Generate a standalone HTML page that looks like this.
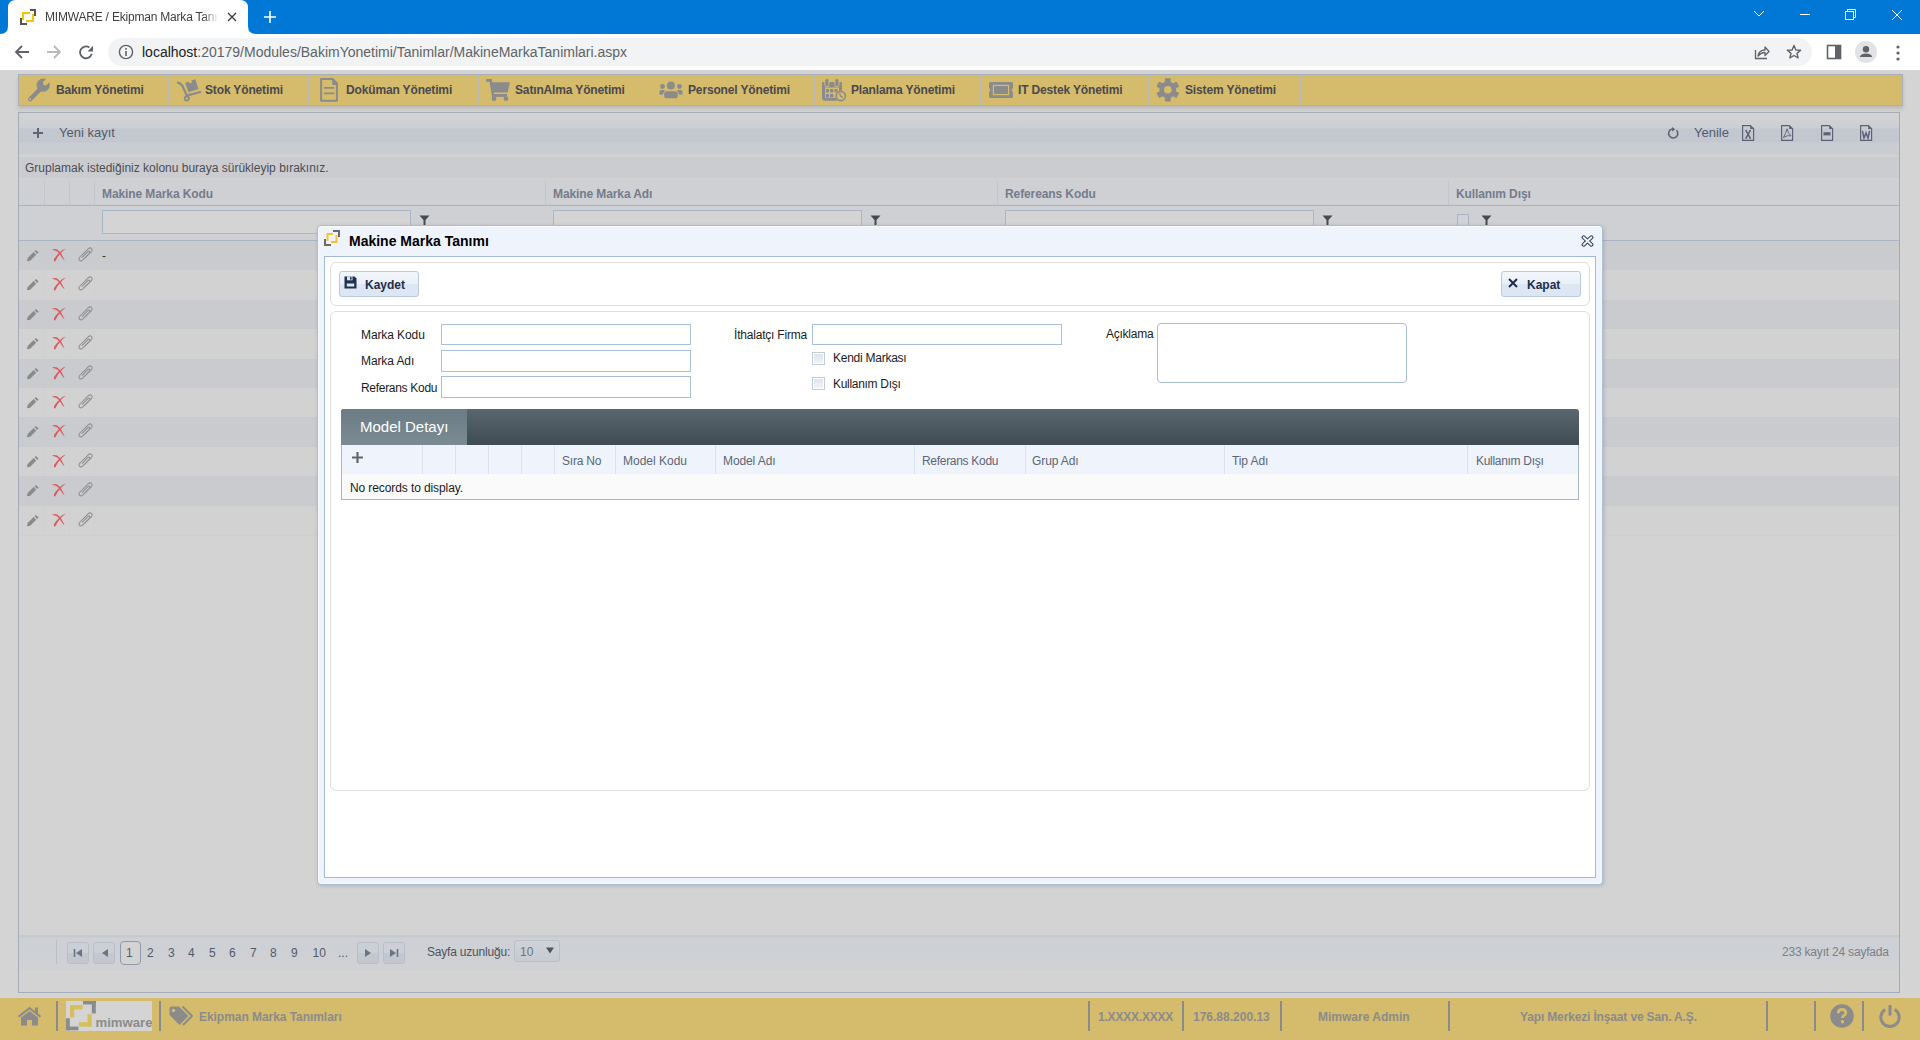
<!DOCTYPE html>
<html><head><meta charset="utf-8">
<style>
*{box-sizing:border-box;margin:0;padding:0}
html,body{width:1920px;height:1040px;overflow:hidden;background:#d4d4d4;font-family:"Liberation Sans",sans-serif;}
.a{position:absolute}
.t{position:absolute;white-space:nowrap;line-height:1}
svg{display:block}
/* chrome */
#tabbar{left:0;top:0;width:1920px;height:34px;background:#0178d6}
#toolbar{left:0;top:34px;width:1920px;height:36px;background:#fff}
#omni{left:108px;top:38px;width:1704px;height:28px;background:#f1f3f4;border-radius:14px}
/* menu */
#menu{left:18px;top:74px;width:1885px;height:32px;background:#d5bb6c;border:1px solid #a9b0ba;box-shadow:0 3px 4px rgba(0,0,0,.12)}
.msep{position:absolute;top:0;width:1px;height:30px;background:#b9bcb4}
.mt{position:absolute;top:8px;font-size:12px;font-weight:bold;color:#4a494d;white-space:nowrap;line-height:14px;letter-spacing:-0.15px}
/* grid */
#grid{left:18px;top:112px;width:1882px;height:881px;border:1px solid #a3abb7;background:#d3d3d3}
#footer{left:0;top:998px;width:1920px;height:42px;background:#d5bb6c}
/* modal */
#modal{left:317px;top:225px;width:1286px;height:660px;background:#eff3fb;border:1px solid #a8bdd8;border-radius:4px;box-shadow:1px 1px 4px rgba(0,0,0,.14),inset 0 0 0 1px #f6f9fd}
#mcontent{left:324px;top:256px;width:1272px;height:622px;background:#fff;border:1px solid #a3b8d3}
</style></head>
<body>
<!-- CHROME -->
<div id="tabbar" class="a"></div>
<!-- active tab -->
<svg class="a" style="left:0;top:0" width="262" height="34" viewBox="0 0 262 34"><path d="M0 34 Q8 34 8 26 L8 8 Q8 0 16 0 L240 0 Q248 0 248 8 L248 26 Q248 34 256 34 Z" fill="#fff"/></svg>
<svg class="a" style="left:20px;top:9px" width="16" height="16" viewBox="0 0 16 16"><path d="M1 9 V15 H7" fill="none" stroke="#555" stroke-width="2"/><path d="M10 1 H15 V7" fill="none" stroke="#555" stroke-width="2"/><path d="M3 11 V4 H10" fill="none" stroke="#f7c600" stroke-width="2"/><path d="M13 5 V12 H6" fill="none" stroke="#f7c600" stroke-width="2"/></svg>
<div class="t" style="left:45px;top:10px;font-size:12px;color:#3c4043;width:174px;overflow:hidden;line-height:15px;letter-spacing:-0.2px;-webkit-mask-image:linear-gradient(to right,#000 158px,transparent 174px)">MIMWARE / Ekipman Marka Tanımları</div>
<svg class="a" style="left:226px;top:11px" width="12" height="12" viewBox="0 0 12 12"><path d="M2 2 L10 10 M10 2 L2 10" stroke="#3c4043" stroke-width="1.4"/></svg>
<svg class="a" style="left:263px;top:10px" width="14" height="14" viewBox="0 0 14 14"><path d="M7 1 V13 M1 7 H13" stroke="#fff" stroke-width="1.6"/></svg>
<!-- window controls -->
<svg class="a" style="left:1753px;top:9px" width="12" height="10" viewBox="0 0 12 10"><path d="M1 2 L6 7 L11 2" fill="none" stroke="#fff" stroke-width="1"/></svg>
<div class="a" style="left:1800px;top:14px;width:10px;height:1px;background:#fff"></div>
<svg class="a" style="left:1845px;top:9px" width="12" height="12" viewBox="0 0 12 12"><rect x="0.5" y="2.5" width="8" height="8" fill="none" stroke="#fff"/><path d="M2.5 2.5 V0.5 H10.5 V8.5 H8.5" fill="none" stroke="#fff"/></svg>
<svg class="a" style="left:1891px;top:9px" width="12" height="12" viewBox="0 0 12 12"><path d="M1 1 L11 11 M11 1 L1 11" stroke="#fff" stroke-width="1"/></svg>
<div id="toolbar" class="a"></div>
<div id="omni" class="a"></div>
<!-- nav icons -->
<svg class="a" style="left:14px;top:44px" width="16" height="16" viewBox="0 0 16 16"><path d="M15 8 H2.5 M8 2 L2 8 L8 14" fill="none" stroke="#5f6368" stroke-width="1.8"/></svg>
<svg class="a" style="left:46px;top:44px" width="16" height="16" viewBox="0 0 16 16"><path d="M1 8 H13.5 M8 2 L14 8 L8 14" fill="none" stroke="#b7b9bc" stroke-width="1.8"/></svg>
<svg class="a" style="left:78px;top:44px" width="16" height="16" viewBox="0 0 16 16"><path d="M11.4 3.5 A5.9 5.9 0 1 0 13.7 9.8" fill="none" stroke="#5f6368" stroke-width="1.8"/><path d="M9.6 7.4 L15 7.4 L15 1.8 Z" fill="#5f6368"/></svg>
<svg class="a" style="left:118px;top:44px" width="16" height="16" viewBox="0 0 16 16"><circle cx="8" cy="8" r="6.6" fill="none" stroke="#5f6368" stroke-width="1.4"/><rect x="7.2" y="7" width="1.6" height="5" fill="#5f6368"/><rect x="7.2" y="4" width="1.6" height="1.7" fill="#5f6368"/></svg>
<div class="t" style="left:142px;top:44px;font-size:14px;line-height:16px;color:#5f6368"><span style="color:#202124">localhost</span>:20179/Modules/BakimYonetimi/Tanimlar/MakineMarkaTanimlari.aspx</div>
<!-- right toolbar icons -->
<svg class="a" style="left:1754px;top:44px" width="16" height="16" viewBox="0 0 16 16"><path d="M1.5 6 V14.5 H13" fill="none" stroke="#5f6368" stroke-width="1.3"/><path d="M4 12 Q5 6 11 6 V3 L15 7.5 L11 11.5 V8.5 Q7 8.5 4 12 Z" fill="none" stroke="#5f6368" stroke-width="1.3" stroke-linejoin="round"/></svg>
<svg class="a" style="left:1786px;top:44px" width="16" height="16" viewBox="0 0 16 16"><path d="M8 1.5 L9.9 6 L14.6 6.3 L11 9.4 L12.1 14 L8 11.5 L3.9 14 L5 9.4 L1.4 6.3 L6.1 6 Z" fill="none" stroke="#5f6368" stroke-width="1.4" stroke-linejoin="round"/></svg>
<svg class="a" style="left:1826px;top:44px" width="16" height="16" viewBox="0 0 16 16"><rect x="1.5" y="1.5" width="13" height="13" fill="none" stroke="#5f6368" stroke-width="1.6"/><rect x="9" y="1.5" width="5.5" height="13" fill="#5f6368"/></svg>
<svg class="a" style="left:1855px;top:41px" width="22" height="22" viewBox="0 0 22 22"><circle cx="11" cy="11" r="11" fill="#e1e3e6"/><circle cx="11" cy="8.3" r="3.2" fill="#5f6368"/><path d="M4.8 16 Q5.5 12.5 11 12.5 Q16.5 12.5 17.2 16 Z" fill="#5f6368"/></svg>
<svg class="a" style="left:1896px;top:45px" width="4" height="16" viewBox="0 0 4 16"><circle cx="2" cy="2" r="1.6" fill="#5f6368"/><circle cx="2" cy="8" r="1.6" fill="#5f6368"/><circle cx="2" cy="14" r="1.6" fill="#5f6368"/></svg>

<!-- MENU -->
<div id="menu" class="a">
<div class="msep" style="left:149px"></div>
<div class="msep" style="left:289px"></div>
<div class="msep" style="left:459px"></div>
<div class="msep" style="left:632px"></div>
<div class="msep" style="left:795px"></div>
<div class="msep" style="left:961px"></div>
<div class="msep" style="left:1129px"></div>
<div class="msep" style="left:1281px"></div>
<div class="mt" style="left:37px">Bakım Yönetimi</div>
<div class="mt" style="left:186px">Stok Yönetimi</div>
<div class="mt" style="left:327px">Doküman Yönetimi</div>
<div class="mt" style="left:496px">SatınAlma Yönetimi</div>
<div class="mt" style="left:669px">Personel Yönetimi</div>
<div class="mt" style="left:832px">Planlama Yönetimi</div>
<div class="mt" style="left:999px">IT Destek Yönetimi</div>
<div class="mt" style="left:1166px">Sistem Yönetimi</div>
<!-- wrench -->
<svg class="a" style="left:8px;top:3px" width="25" height="25" viewBox="0 0 25 25"><path d="M3.2 21.2 L13.5 10.8" stroke="#8b8b8b" stroke-width="4.4" stroke-linecap="round"/><circle cx="16.2" cy="7.2" r="6.6" fill="#8b8b8b"/><circle cx="18.2" cy="5.1" r="2.3" fill="#d5bb6c"/><path d="M16.57 3.47 L19.83 6.73 L26 0.5 L22.8 -2.7 Z" fill="#d5bb6c"/><circle cx="3.2" cy="21.2" r="1" fill="#d5bb6c"/></svg>
<!-- stok hand truck -->
<svg class="a" style="left:158px;top:4px" width="26" height="24" viewBox="0 0 26 24"><path d="M0.8 3.6 Q3.8 4.2 5.4 6.8 L9.8 16.6 L23.3 13" fill="none" stroke="#8b8b8b" stroke-width="2.2" stroke-linecap="round" stroke-linejoin="round"/><circle cx="9.8" cy="19.6" r="2.1" fill="none" stroke="#8b8b8b" stroke-width="1.8"/><path d="M8.2 4 L11.5 13.3 L21.5 9.9 L18.3 0.3 L14.4 1.6 L15.1 3.6 Q13.5 4.6 12 3.8 L11.4 2.6 Z" fill="#8b8b8b"/></svg>
<!-- document -->
<svg class="a" style="left:301px;top:3px" width="19" height="25" viewBox="0 0 19 25"><path d="M1.1 1 H12.6 L16.9 5.3 V22.8 H1.1 Z" fill="none" stroke="#8b8b8b" stroke-width="2" stroke-linejoin="round"/><path d="M12.2 1 H12.9 L16.9 5 V7 H12.2 Z" fill="#8b8b8b"/><path d="M4.6 9.8 H13.6 M4.6 15.4 H13.6" stroke="#8b8b8b" stroke-width="1.8" stroke-linecap="round"/></svg>
<!-- cart -->
<svg class="a" style="left:467px;top:4px" width="25" height="23" viewBox="0 0 25 23"><g fill="#8b8b8b"><rect x="0" y="0.1" width="6.2" height="2.7" rx="0.8"/><path d="M3.4 1.4 L5.9 1.4 L8.6 17.9 L6.1 17.9 Z"/><path d="M4.2 3.2 H23.9 L21.7 13.5 H6 Z"/><rect x="6.8" y="15" width="14.2" height="2.9"/><rect x="5.8" y="17.4" width="4.4" height="4.4" rx="1.6"/><rect x="17.8" y="17.4" width="4.4" height="4.4" rx="1.6"/></g></svg>
<!-- people -->
<svg class="a" style="left:640px;top:5px" width="26" height="20" viewBox="0 0 26 20"><g fill="#8b8b8b"><circle cx="11.9" cy="5.5" r="4"/><circle cx="3.5" cy="6.5" r="2.4"/><circle cx="20.4" cy="6.5" r="2.4"/><rect x="5.2" y="11.2" width="13.6" height="7.1" rx="2.6"/><path d="M1.8 10 H6 L3.6 14.8 H1.8 Q0 14.8 0.2 13 Q0.5 10 1.8 10 Z"/><path d="M22.1 10 H17.9 L20.3 14.8 H22.1 Q23.9 14.8 23.7 13 Q23.4 10 22.1 10 Z"/></g></svg>
<!-- calendar -->
<svg class="a" style="left:803px;top:3px" width="26" height="25" viewBox="0 0 26 25"><rect x="1.5" y="5.7" width="17" height="15.6" rx="1.5" fill="none" stroke="#8b8b8b" stroke-width="3"/><rect x="0" y="4.2" width="20" height="5.3" fill="#8b8b8b"/><rect x="2.8" y="0.4" width="4.2" height="8.4" rx="2.1" fill="#8b8b8b" stroke="#d5bb6c" stroke-width="1"/><rect x="12.8" y="0.4" width="4.2" height="8.4" rx="2.1" fill="#8b8b8b" stroke="#d5bb6c" stroke-width="1"/><g fill="#8b8b8b"><rect x="3.8" y="11" width="3.2" height="3.4"/><rect x="8" y="11" width="3.4" height="3.4"/><rect x="12.5" y="11" width="3.2" height="3.4"/><rect x="3.8" y="16" width="3.2" height="3.2"/><rect x="8" y="16" width="3.4" height="3.2"/></g><circle cx="18.8" cy="18" r="5.6" fill="#d5bb6c"/><circle cx="18.8" cy="18" r="4.6" fill="none" stroke="#8b8b8b" stroke-width="1.6"/><path d="M17.6 15.2 L18.6 18.4 L20.8 19.4" fill="none" stroke="#8b8b8b" stroke-width="1.3"/></svg>
<!-- ticket -->
<svg class="a" style="left:970px;top:7px" width="25" height="17" viewBox="0 0 25 17"><path d="M1.5 0 H22.5 Q24 0 24 1.5 V6.2 A1.9 1.9 0 0 0 24 9.8 V14.5 Q24 16 22.5 16 H1.5 Q0 16 0 14.5 V9.8 A1.9 1.9 0 0 0 0 6.2 V1.5 Q0 0 1.5 0 Z" fill="#8b8b8b"/><rect x="4.4" y="3.4" width="15.2" height="9.2" fill="none" stroke="#d5bb6c" stroke-width="1.2"/></svg>
<!-- gear -->
<svg class="a" style="left:1137px;top:3px" width="24" height="24" viewBox="0 0 24 24"><g transform="translate(11.8 11.8)" fill="#8b8b8b"><circle r="8.4"/><rect x="-2.9" y="-11.6" width="5.8" height="6" rx="0.6" transform="rotate(0)"/><rect x="-2.9" y="-11.6" width="5.8" height="6" rx="0.6" transform="rotate(60)"/><rect x="-2.9" y="-11.6" width="5.8" height="6" rx="0.6" transform="rotate(120)"/><rect x="-2.9" y="-11.6" width="5.8" height="6" rx="0.6" transform="rotate(180)"/><rect x="-2.9" y="-11.6" width="5.8" height="6" rx="0.6" transform="rotate(240)"/><rect x="-2.9" y="-11.6" width="5.8" height="6" rx="0.6" transform="rotate(300)"/><circle r="3.8" fill="#d5bb6c"/></g></svg>
</div>

<!-- GRID -->
<div id="grid" class="a"></div>
<div class="a" style="left:19px;top:113px;width:1880px;height:42px;background:linear-gradient(#d3d4d6 0px,#cbced3 15px,#c3c7cf 16px,#c3c7cf 29px,#c9ccd1 30px,#c9ccd1 41px,#d3d3d3 42px)"></div>
<div class="a" style="left:19px;top:155px;width:1880px;height:2px;background:#d3d3d3"></div>
<div class="a" style="left:19px;top:157px;width:1880px;height:21px;background:#cbcccf"></div>
<div class="a" style="left:19px;top:178px;width:1880px;height:2px;background:#d1d1d1"></div>
<div class="a" style="left:19px;top:180px;width:1880px;height:60px;background:#cfd0d3"></div>
<div class="a" style="left:19px;top:205px;width:1880px;height:1px;background:#abb5c2"></div>
<div class="a" style="left:19px;top:240px;width:1880px;height:1px;background:#abb5c2"></div>
<div class="a" style="left:44px;top:180px;width:1px;height:25px;background:#c3c7cd"></div>
<div class="a" style="left:69px;top:180px;width:1px;height:25px;background:#c3c7cd"></div>
<div class="a" style="left:94px;top:180px;width:1px;height:25px;background:#c3c7cd"></div>
<div class="a" style="left:545px;top:180px;width:1px;height:25px;background:#c3c7cd"></div>
<div class="a" style="left:997px;top:180px;width:1px;height:25px;background:#c3c7cd"></div>
<div class="a" style="left:1448px;top:180px;width:1px;height:25px;background:#c3c7cd"></div>
<svg class="a" style="left:32px;top:127px" width="12" height="12" viewBox="0 0 12 12"><path d="M6 1 V11 M1 6 H11" stroke="#5d6677" stroke-width="2"/></svg>
<div class="t" style="left:59px;top:126px;font-size:13px;line-height:14px;color:#535c6d">Yeni kayıt</div>
<div class="t" style="left:25px;top:161px;font-size:12px;line-height:14px;color:#4b4e55">Gruplamak istediğiniz kolonu buraya sürükleyip bırakınız.</div>
<div class="t" style="left:102px;top:187px;font-size:12px;line-height:14px;font-weight:bold;color:#747c8c;letter-spacing:-0.1px">Makine Marka Kodu</div>
<div class="t" style="left:553px;top:187px;font-size:12px;line-height:14px;font-weight:bold;color:#747c8c;letter-spacing:-0.1px">Makine Marka Adı</div>
<div class="t" style="left:1005px;top:187px;font-size:12px;line-height:14px;font-weight:bold;color:#747c8c;letter-spacing:-0.1px">Refereans Kodu</div>
<div class="t" style="left:1456px;top:187px;font-size:12px;line-height:14px;font-weight:bold;color:#747c8c;letter-spacing:-0.1px">Kullanım Dışı</div>
<div class="a" style="left:102px;top:210px;width:309px;height:24px;background:#d4d4d4;border:1px solid #a8b6c8"></div><svg class="a" style="left:419px;top:215px" width="11" height="12" viewBox="0 0 11 12"><path d="M0.5 0.5 H10.5 L6.5 5 V11.5 L4.5 11.5 V5 Z" fill="#444a52"/></svg>
<div class="a" style="left:553px;top:210px;width:309px;height:24px;background:#d4d4d4;border:1px solid #a8b6c8"></div><svg class="a" style="left:870px;top:215px" width="11" height="12" viewBox="0 0 11 12"><path d="M0.5 0.5 H10.5 L6.5 5 V11.5 L4.5 11.5 V5 Z" fill="#444a52"/></svg>
<div class="a" style="left:1005px;top:210px;width:309px;height:24px;background:#d4d4d4;border:1px solid #a8b6c8"></div><svg class="a" style="left:1322px;top:215px" width="11" height="12" viewBox="0 0 11 12"><path d="M0.5 0.5 H10.5 L6.5 5 V11.5 L4.5 11.5 V5 Z" fill="#444a52"/></svg>
<div class="a" style="left:1457px;top:214px;width:12px;height:12px;background:#cfd2d8;border:1px solid #aab3bf"></div>
<svg class="a" style="left:1481px;top:215px" width="11" height="12" viewBox="0 0 11 12"><path d="M0.5 0.5 H10.5 L6.5 5 V11.5 L4.5 11.5 V5 Z" fill="#444a52"/></svg>
<!-- right toolbar -->
<svg class="a" style="left:1667px;top:127px" width="13" height="13" viewBox="0 0 13 13"><path d="M9.5 3.2 A4.6 4.6 0 1 1 5 2" fill="none" stroke="#5d6677" stroke-width="1.6"/><path d="M5 0 L8.3 2.2 L5 4.6 Z" fill="#5d6677"/></svg>
<div class="t" style="left:1694px;top:126px;font-size:13px;line-height:14px;color:#535c6d">Yenile</div>
<svg class="a" style="left:1742px;top:125px" width="13" height="16" viewBox="0 0 13 16"><path d="M0.6 0.6 H8.4 L11.6 3.8 V15.4 H0.6 Z" fill="none" stroke="#5a6476" stroke-width="1.2"/><path d="M8.2 0.6 L11.6 4 H8.2 Z" fill="#5a6476"/><path d="M3.2 5.6 H5 M7.2 5.6 H9 M3.2 13.2 H5 M7.2 13.2 H9" stroke="#5a6476" stroke-width="1"/><path d="M4 5.6 L8.2 13.2 M8.2 5.6 L4 13.2" stroke="#5a6476" stroke-width="1.5"/></svg><svg class="a" style="left:1781px;top:125px" width="13" height="16" viewBox="0 0 13 16"><path d="M0.6 0.6 H8.4 L11.6 3.8 V15.4 H0.6 Z" fill="none" stroke="#5a6476" stroke-width="1.2"/><path d="M8.2 0.6 L11.6 4 H8.2 Z" fill="#5a6476"/><path d="M6 3.8 Q6.8 8.2 10 10.8 Q6.2 9.8 2.4 12.6 Q5 8.4 6 3.8 Z" fill="none" stroke="#5a6476" stroke-width="0.9"/></svg><svg class="a" style="left:1821px;top:125px" width="13" height="16" viewBox="0 0 13 16"><path d="M0.6 0.6 H8.4 L11.6 3.8 V15.4 H0.6 Z" fill="none" stroke="#5a6476" stroke-width="1.2"/><path d="M8.2 0.6 L11.6 4 H8.2 Z" fill="#5a6476"/><rect x="2.5" y="7.2" width="7" height="3.2" fill="#5a6476"/></svg><svg class="a" style="left:1860px;top:125px" width="13" height="16" viewBox="0 0 13 16"><path d="M0.6 0.6 H8.4 L11.6 3.8 V15.4 H0.6 Z" fill="none" stroke="#5a6476" stroke-width="1.2"/><path d="M8.2 0.6 L11.6 4 H8.2 Z" fill="#5a6476"/><path d="M2.4 6 L4 13 L6 8 L8 13 L9.6 6" fill="none" stroke="#5a6476" stroke-width="1.5"/></svg>
<!-- rows -->
<div class="a" style="left:19px;top:241.0px;width:1880px;height:29.4px;background:#cacbce"><svg class="a" style="left:7px;top:8px" width="14" height="14" viewBox="0 0 14 14"><path d="M0.9 12.3 L1.6 9.1 L7.6 3.1 L10.2 5.7 L4.2 11.7 Z" fill="#8a8a8a"/><path d="M12.6 3.6 L9.9 0.9 L8.5 2.3 L11.2 5 Z" fill="#8a8a8a"/></svg><svg class="a" style="left:33px;top:7px" width="15" height="15" viewBox="0 0 15 15"><path d="M0 1.6 Q2.5 0.4 5.2 1.6 Q7.6 3.2 9.5 6.2 L12.6 12 Q11.6 11.8 10.5 10.2 L7.4 5.7 Q5.6 3.4 3.6 2.8 Q1.8 2.5 0 1.6 Z" fill="#d75b60"/><path d="M14 0.6 Q10.2 1.6 7 4.9 Q3.8 8 2.2 10.8 Q1.5 12.5 2.2 13.3 Q3.2 13.8 3.8 12.4 Q5 9.2 7.9 6.2 Q10.8 2.8 14 0.6 Z" fill="#d75b60"/></svg><svg class="a" style="left:59px;top:6px" width="16" height="15" viewBox="0 0 16 15"><path d="M6.8 11.2 L13.2 4.8 Q14.9 2.9 13.5 1.5 Q12.1 0.1 10.2 1.8 L2 10 Q0.2 12 1.5 13.3 Q2.9 14.6 4.8 12.8 L11.3 6.3 Q12.3 5.1 11.6 4.4 Q10.9 3.7 9.8 4.7 L4.2 10.3" fill="none" stroke="#8e8e8e" stroke-width="1.05" stroke-linecap="round"/></svg><div class="t" style="left:83px;top:9px;font-size:12px;color:#333">-</div></div>
<div class="a" style="left:19px;top:270.4px;width:1880px;height:29.4px;background:#d2d2d2"><div class="a" style="left:25px;top:0;width:1px;height:29px;background:#cfcfcf"></div><div class="a" style="left:50px;top:0;width:1px;height:29px;background:#cfcfcf"></div><div class="a" style="left:75px;top:0;width:1px;height:29px;background:#cfcfcf"></div><svg class="a" style="left:7px;top:8px" width="14" height="14" viewBox="0 0 14 14"><path d="M0.9 12.3 L1.6 9.1 L7.6 3.1 L10.2 5.7 L4.2 11.7 Z" fill="#8a8a8a"/><path d="M12.6 3.6 L9.9 0.9 L8.5 2.3 L11.2 5 Z" fill="#8a8a8a"/></svg><svg class="a" style="left:33px;top:7px" width="15" height="15" viewBox="0 0 15 15"><path d="M0 1.6 Q2.5 0.4 5.2 1.6 Q7.6 3.2 9.5 6.2 L12.6 12 Q11.6 11.8 10.5 10.2 L7.4 5.7 Q5.6 3.4 3.6 2.8 Q1.8 2.5 0 1.6 Z" fill="#d75b60"/><path d="M14 0.6 Q10.2 1.6 7 4.9 Q3.8 8 2.2 10.8 Q1.5 12.5 2.2 13.3 Q3.2 13.8 3.8 12.4 Q5 9.2 7.9 6.2 Q10.8 2.8 14 0.6 Z" fill="#d75b60"/></svg><svg class="a" style="left:59px;top:6px" width="16" height="15" viewBox="0 0 16 15"><path d="M6.8 11.2 L13.2 4.8 Q14.9 2.9 13.5 1.5 Q12.1 0.1 10.2 1.8 L2 10 Q0.2 12 1.5 13.3 Q2.9 14.6 4.8 12.8 L11.3 6.3 Q12.3 5.1 11.6 4.4 Q10.9 3.7 9.8 4.7 L4.2 10.3" fill="none" stroke="#8e8e8e" stroke-width="1.05" stroke-linecap="round"/></svg></div>
<div class="a" style="left:19px;top:299.8px;width:1880px;height:29.4px;background:#cacbce"><svg class="a" style="left:7px;top:8px" width="14" height="14" viewBox="0 0 14 14"><path d="M0.9 12.3 L1.6 9.1 L7.6 3.1 L10.2 5.7 L4.2 11.7 Z" fill="#8a8a8a"/><path d="M12.6 3.6 L9.9 0.9 L8.5 2.3 L11.2 5 Z" fill="#8a8a8a"/></svg><svg class="a" style="left:33px;top:7px" width="15" height="15" viewBox="0 0 15 15"><path d="M0 1.6 Q2.5 0.4 5.2 1.6 Q7.6 3.2 9.5 6.2 L12.6 12 Q11.6 11.8 10.5 10.2 L7.4 5.7 Q5.6 3.4 3.6 2.8 Q1.8 2.5 0 1.6 Z" fill="#d75b60"/><path d="M14 0.6 Q10.2 1.6 7 4.9 Q3.8 8 2.2 10.8 Q1.5 12.5 2.2 13.3 Q3.2 13.8 3.8 12.4 Q5 9.2 7.9 6.2 Q10.8 2.8 14 0.6 Z" fill="#d75b60"/></svg><svg class="a" style="left:59px;top:6px" width="16" height="15" viewBox="0 0 16 15"><path d="M6.8 11.2 L13.2 4.8 Q14.9 2.9 13.5 1.5 Q12.1 0.1 10.2 1.8 L2 10 Q0.2 12 1.5 13.3 Q2.9 14.6 4.8 12.8 L11.3 6.3 Q12.3 5.1 11.6 4.4 Q10.9 3.7 9.8 4.7 L4.2 10.3" fill="none" stroke="#8e8e8e" stroke-width="1.05" stroke-linecap="round"/></svg></div>
<div class="a" style="left:19px;top:329.2px;width:1880px;height:29.4px;background:#d2d2d2"><div class="a" style="left:25px;top:0;width:1px;height:29px;background:#cfcfcf"></div><div class="a" style="left:50px;top:0;width:1px;height:29px;background:#cfcfcf"></div><div class="a" style="left:75px;top:0;width:1px;height:29px;background:#cfcfcf"></div><svg class="a" style="left:7px;top:8px" width="14" height="14" viewBox="0 0 14 14"><path d="M0.9 12.3 L1.6 9.1 L7.6 3.1 L10.2 5.7 L4.2 11.7 Z" fill="#8a8a8a"/><path d="M12.6 3.6 L9.9 0.9 L8.5 2.3 L11.2 5 Z" fill="#8a8a8a"/></svg><svg class="a" style="left:33px;top:7px" width="15" height="15" viewBox="0 0 15 15"><path d="M0 1.6 Q2.5 0.4 5.2 1.6 Q7.6 3.2 9.5 6.2 L12.6 12 Q11.6 11.8 10.5 10.2 L7.4 5.7 Q5.6 3.4 3.6 2.8 Q1.8 2.5 0 1.6 Z" fill="#d75b60"/><path d="M14 0.6 Q10.2 1.6 7 4.9 Q3.8 8 2.2 10.8 Q1.5 12.5 2.2 13.3 Q3.2 13.8 3.8 12.4 Q5 9.2 7.9 6.2 Q10.8 2.8 14 0.6 Z" fill="#d75b60"/></svg><svg class="a" style="left:59px;top:6px" width="16" height="15" viewBox="0 0 16 15"><path d="M6.8 11.2 L13.2 4.8 Q14.9 2.9 13.5 1.5 Q12.1 0.1 10.2 1.8 L2 10 Q0.2 12 1.5 13.3 Q2.9 14.6 4.8 12.8 L11.3 6.3 Q12.3 5.1 11.6 4.4 Q10.9 3.7 9.8 4.7 L4.2 10.3" fill="none" stroke="#8e8e8e" stroke-width="1.05" stroke-linecap="round"/></svg></div>
<div class="a" style="left:19px;top:358.6px;width:1880px;height:29.4px;background:#cacbce"><svg class="a" style="left:7px;top:8px" width="14" height="14" viewBox="0 0 14 14"><path d="M0.9 12.3 L1.6 9.1 L7.6 3.1 L10.2 5.7 L4.2 11.7 Z" fill="#8a8a8a"/><path d="M12.6 3.6 L9.9 0.9 L8.5 2.3 L11.2 5 Z" fill="#8a8a8a"/></svg><svg class="a" style="left:33px;top:7px" width="15" height="15" viewBox="0 0 15 15"><path d="M0 1.6 Q2.5 0.4 5.2 1.6 Q7.6 3.2 9.5 6.2 L12.6 12 Q11.6 11.8 10.5 10.2 L7.4 5.7 Q5.6 3.4 3.6 2.8 Q1.8 2.5 0 1.6 Z" fill="#d75b60"/><path d="M14 0.6 Q10.2 1.6 7 4.9 Q3.8 8 2.2 10.8 Q1.5 12.5 2.2 13.3 Q3.2 13.8 3.8 12.4 Q5 9.2 7.9 6.2 Q10.8 2.8 14 0.6 Z" fill="#d75b60"/></svg><svg class="a" style="left:59px;top:6px" width="16" height="15" viewBox="0 0 16 15"><path d="M6.8 11.2 L13.2 4.8 Q14.9 2.9 13.5 1.5 Q12.1 0.1 10.2 1.8 L2 10 Q0.2 12 1.5 13.3 Q2.9 14.6 4.8 12.8 L11.3 6.3 Q12.3 5.1 11.6 4.4 Q10.9 3.7 9.8 4.7 L4.2 10.3" fill="none" stroke="#8e8e8e" stroke-width="1.05" stroke-linecap="round"/></svg></div>
<div class="a" style="left:19px;top:388.0px;width:1880px;height:29.4px;background:#d2d2d2"><div class="a" style="left:25px;top:0;width:1px;height:29px;background:#cfcfcf"></div><div class="a" style="left:50px;top:0;width:1px;height:29px;background:#cfcfcf"></div><div class="a" style="left:75px;top:0;width:1px;height:29px;background:#cfcfcf"></div><svg class="a" style="left:7px;top:8px" width="14" height="14" viewBox="0 0 14 14"><path d="M0.9 12.3 L1.6 9.1 L7.6 3.1 L10.2 5.7 L4.2 11.7 Z" fill="#8a8a8a"/><path d="M12.6 3.6 L9.9 0.9 L8.5 2.3 L11.2 5 Z" fill="#8a8a8a"/></svg><svg class="a" style="left:33px;top:7px" width="15" height="15" viewBox="0 0 15 15"><path d="M0 1.6 Q2.5 0.4 5.2 1.6 Q7.6 3.2 9.5 6.2 L12.6 12 Q11.6 11.8 10.5 10.2 L7.4 5.7 Q5.6 3.4 3.6 2.8 Q1.8 2.5 0 1.6 Z" fill="#d75b60"/><path d="M14 0.6 Q10.2 1.6 7 4.9 Q3.8 8 2.2 10.8 Q1.5 12.5 2.2 13.3 Q3.2 13.8 3.8 12.4 Q5 9.2 7.9 6.2 Q10.8 2.8 14 0.6 Z" fill="#d75b60"/></svg><svg class="a" style="left:59px;top:6px" width="16" height="15" viewBox="0 0 16 15"><path d="M6.8 11.2 L13.2 4.8 Q14.9 2.9 13.5 1.5 Q12.1 0.1 10.2 1.8 L2 10 Q0.2 12 1.5 13.3 Q2.9 14.6 4.8 12.8 L11.3 6.3 Q12.3 5.1 11.6 4.4 Q10.9 3.7 9.8 4.7 L4.2 10.3" fill="none" stroke="#8e8e8e" stroke-width="1.05" stroke-linecap="round"/></svg></div>
<div class="a" style="left:19px;top:417.4px;width:1880px;height:29.4px;background:#cacbce"><svg class="a" style="left:7px;top:8px" width="14" height="14" viewBox="0 0 14 14"><path d="M0.9 12.3 L1.6 9.1 L7.6 3.1 L10.2 5.7 L4.2 11.7 Z" fill="#8a8a8a"/><path d="M12.6 3.6 L9.9 0.9 L8.5 2.3 L11.2 5 Z" fill="#8a8a8a"/></svg><svg class="a" style="left:33px;top:7px" width="15" height="15" viewBox="0 0 15 15"><path d="M0 1.6 Q2.5 0.4 5.2 1.6 Q7.6 3.2 9.5 6.2 L12.6 12 Q11.6 11.8 10.5 10.2 L7.4 5.7 Q5.6 3.4 3.6 2.8 Q1.8 2.5 0 1.6 Z" fill="#d75b60"/><path d="M14 0.6 Q10.2 1.6 7 4.9 Q3.8 8 2.2 10.8 Q1.5 12.5 2.2 13.3 Q3.2 13.8 3.8 12.4 Q5 9.2 7.9 6.2 Q10.8 2.8 14 0.6 Z" fill="#d75b60"/></svg><svg class="a" style="left:59px;top:6px" width="16" height="15" viewBox="0 0 16 15"><path d="M6.8 11.2 L13.2 4.8 Q14.9 2.9 13.5 1.5 Q12.1 0.1 10.2 1.8 L2 10 Q0.2 12 1.5 13.3 Q2.9 14.6 4.8 12.8 L11.3 6.3 Q12.3 5.1 11.6 4.4 Q10.9 3.7 9.8 4.7 L4.2 10.3" fill="none" stroke="#8e8e8e" stroke-width="1.05" stroke-linecap="round"/></svg></div>
<div class="a" style="left:19px;top:446.8px;width:1880px;height:29.4px;background:#d2d2d2"><div class="a" style="left:25px;top:0;width:1px;height:29px;background:#cfcfcf"></div><div class="a" style="left:50px;top:0;width:1px;height:29px;background:#cfcfcf"></div><div class="a" style="left:75px;top:0;width:1px;height:29px;background:#cfcfcf"></div><svg class="a" style="left:7px;top:8px" width="14" height="14" viewBox="0 0 14 14"><path d="M0.9 12.3 L1.6 9.1 L7.6 3.1 L10.2 5.7 L4.2 11.7 Z" fill="#8a8a8a"/><path d="M12.6 3.6 L9.9 0.9 L8.5 2.3 L11.2 5 Z" fill="#8a8a8a"/></svg><svg class="a" style="left:33px;top:7px" width="15" height="15" viewBox="0 0 15 15"><path d="M0 1.6 Q2.5 0.4 5.2 1.6 Q7.6 3.2 9.5 6.2 L12.6 12 Q11.6 11.8 10.5 10.2 L7.4 5.7 Q5.6 3.4 3.6 2.8 Q1.8 2.5 0 1.6 Z" fill="#d75b60"/><path d="M14 0.6 Q10.2 1.6 7 4.9 Q3.8 8 2.2 10.8 Q1.5 12.5 2.2 13.3 Q3.2 13.8 3.8 12.4 Q5 9.2 7.9 6.2 Q10.8 2.8 14 0.6 Z" fill="#d75b60"/></svg><svg class="a" style="left:59px;top:6px" width="16" height="15" viewBox="0 0 16 15"><path d="M6.8 11.2 L13.2 4.8 Q14.9 2.9 13.5 1.5 Q12.1 0.1 10.2 1.8 L2 10 Q0.2 12 1.5 13.3 Q2.9 14.6 4.8 12.8 L11.3 6.3 Q12.3 5.1 11.6 4.4 Q10.9 3.7 9.8 4.7 L4.2 10.3" fill="none" stroke="#8e8e8e" stroke-width="1.05" stroke-linecap="round"/></svg></div>
<div class="a" style="left:19px;top:476.2px;width:1880px;height:29.4px;background:#cacbce"><svg class="a" style="left:7px;top:8px" width="14" height="14" viewBox="0 0 14 14"><path d="M0.9 12.3 L1.6 9.1 L7.6 3.1 L10.2 5.7 L4.2 11.7 Z" fill="#8a8a8a"/><path d="M12.6 3.6 L9.9 0.9 L8.5 2.3 L11.2 5 Z" fill="#8a8a8a"/></svg><svg class="a" style="left:33px;top:7px" width="15" height="15" viewBox="0 0 15 15"><path d="M0 1.6 Q2.5 0.4 5.2 1.6 Q7.6 3.2 9.5 6.2 L12.6 12 Q11.6 11.8 10.5 10.2 L7.4 5.7 Q5.6 3.4 3.6 2.8 Q1.8 2.5 0 1.6 Z" fill="#d75b60"/><path d="M14 0.6 Q10.2 1.6 7 4.9 Q3.8 8 2.2 10.8 Q1.5 12.5 2.2 13.3 Q3.2 13.8 3.8 12.4 Q5 9.2 7.9 6.2 Q10.8 2.8 14 0.6 Z" fill="#d75b60"/></svg><svg class="a" style="left:59px;top:6px" width="16" height="15" viewBox="0 0 16 15"><path d="M6.8 11.2 L13.2 4.8 Q14.9 2.9 13.5 1.5 Q12.1 0.1 10.2 1.8 L2 10 Q0.2 12 1.5 13.3 Q2.9 14.6 4.8 12.8 L11.3 6.3 Q12.3 5.1 11.6 4.4 Q10.9 3.7 9.8 4.7 L4.2 10.3" fill="none" stroke="#8e8e8e" stroke-width="1.05" stroke-linecap="round"/></svg></div>
<div class="a" style="left:19px;top:505.6px;width:1880px;height:29.4px;background:#d2d2d2"><div class="a" style="left:25px;top:0;width:1px;height:29px;background:#cfcfcf"></div><div class="a" style="left:50px;top:0;width:1px;height:29px;background:#cfcfcf"></div><div class="a" style="left:75px;top:0;width:1px;height:29px;background:#cfcfcf"></div><svg class="a" style="left:7px;top:8px" width="14" height="14" viewBox="0 0 14 14"><path d="M0.9 12.3 L1.6 9.1 L7.6 3.1 L10.2 5.7 L4.2 11.7 Z" fill="#8a8a8a"/><path d="M12.6 3.6 L9.9 0.9 L8.5 2.3 L11.2 5 Z" fill="#8a8a8a"/></svg><svg class="a" style="left:33px;top:7px" width="15" height="15" viewBox="0 0 15 15"><path d="M0 1.6 Q2.5 0.4 5.2 1.6 Q7.6 3.2 9.5 6.2 L12.6 12 Q11.6 11.8 10.5 10.2 L7.4 5.7 Q5.6 3.4 3.6 2.8 Q1.8 2.5 0 1.6 Z" fill="#d75b60"/><path d="M14 0.6 Q10.2 1.6 7 4.9 Q3.8 8 2.2 10.8 Q1.5 12.5 2.2 13.3 Q3.2 13.8 3.8 12.4 Q5 9.2 7.9 6.2 Q10.8 2.8 14 0.6 Z" fill="#d75b60"/></svg><svg class="a" style="left:59px;top:6px" width="16" height="15" viewBox="0 0 16 15"><path d="M6.8 11.2 L13.2 4.8 Q14.9 2.9 13.5 1.5 Q12.1 0.1 10.2 1.8 L2 10 Q0.2 12 1.5 13.3 Q2.9 14.6 4.8 12.8 L11.3 6.3 Q12.3 5.1 11.6 4.4 Q10.9 3.7 9.8 4.7 L4.2 10.3" fill="none" stroke="#8e8e8e" stroke-width="1.05" stroke-linecap="round"/></svg></div>
<div class="a" style="left:19px;top:535px;width:1880px;height:1px;background:#cfcfcf"></div>
<!-- pager -->
<div class="a" style="left:19px;top:935px;width:1880px;height:35px;background:linear-gradient(#c4c8cf,#c6cad0 2px,#cdd0d4 3px,#cfd1d4)"></div>
<div class="a" style="left:56px;top:940px;width:1px;height:24px;background:#b9bec6"></div>
<div class="a" style="left:67px;top:942px;width:22px;height:22px;border:1px solid #b7bfca;border-radius:3px;background:linear-gradient(#ccd0d6 50%,#c3c8d0 50%)"><svg class="a" style="left:-1px;top:-1px" width="22" height="22" viewBox="0 0 22 22"><path d="M7.5 7 V15" stroke="#6b7480" stroke-width="1.6"/><path d="M15 7 V15 L9 11 Z" fill="#6b7480"/></svg></div><div class="a" style="left:93px;top:942px;width:22px;height:22px;border:1px solid #b7bfca;border-radius:3px;background:linear-gradient(#ccd0d6 50%,#c3c8d0 50%)"><svg class="a" style="left:-1px;top:-1px" width="22" height="22" viewBox="0 0 22 22"><path d="M15 7 V15 L9 11 Z" fill="#6b7480"/></svg></div><div class="a" style="left:357px;top:942px;width:22px;height:22px;border:1px solid #b7bfca;border-radius:3px;background:linear-gradient(#ccd0d6 50%,#c3c8d0 50%)"><svg class="a" style="left:-1px;top:-1px" width="22" height="22" viewBox="0 0 22 22"><path d="M8 7 V15 L14 11 Z" fill="#6b7480"/></svg></div><div class="a" style="left:383px;top:942px;width:22px;height:22px;border:1px solid #b7bfca;border-radius:3px;background:linear-gradient(#ccd0d6 50%,#c3c8d0 50%)"><svg class="a" style="left:-1px;top:-1px" width="22" height="22" viewBox="0 0 22 22"><path d="M14.5 7 V15" stroke="#6b7480" stroke-width="1.6"/><path d="M7 7 V15 L13 11 Z" fill="#6b7480"/></svg></div><div class="a" style="left:120px;top:941px;width:21px;height:24px;border:1px solid #8e9aab;border-radius:4px;background:#d3d3d3"></div><div class="t" style="left:126px;top:946px;font-size:12px;line-height:14px;color:#545a66">1</div><div class="t" style="left:147px;top:946px;font-size:12px;line-height:14px;color:#545a66">2</div><div class="t" style="left:168px;top:946px;font-size:12px;line-height:14px;color:#545a66">3</div><div class="t" style="left:188px;top:946px;font-size:12px;line-height:14px;color:#545a66">4</div><div class="t" style="left:209px;top:946px;font-size:12px;line-height:14px;color:#545a66">5</div><div class="t" style="left:229px;top:946px;font-size:12px;line-height:14px;color:#545a66">6</div><div class="t" style="left:250px;top:946px;font-size:12px;line-height:14px;color:#545a66">7</div><div class="t" style="left:270px;top:946px;font-size:12px;line-height:14px;color:#545a66">8</div><div class="t" style="left:291px;top:946px;font-size:12px;line-height:14px;color:#545a66">9</div><div class="t" style="left:312.5px;top:946px;font-size:12px;line-height:14px;color:#545a66">10</div><div class="t" style="left:338px;top:946px;font-size:12px;line-height:14px;color:#545a66">...</div><div class="t" style="left:427px;top:945px;font-size:12px;line-height:14px;color:#4f545c;letter-spacing:-0.2px">Sayfa uzunluğu:</div><div class="a" style="left:514px;top:940px;width:46px;height:22px;border:1px solid #b7bfca;border-radius:3px;background:linear-gradient(#cfd2d7,#c7cbd2)"></div><div class="t" style="left:520px;top:945px;font-size:12px;line-height:14px;color:#6b7480">10</div><svg class="a" style="left:546px;top:947px" width="8" height="7" viewBox="0 0 8 7"><path d="M0 0.5 H8 L4 6.5 Z" fill="#4f5560"/></svg><div class="t" style="left:1782px;top:945px;font-size:12px;line-height:14px;color:#7a808a;letter-spacing:-0.2px">233 kayıt 24 sayfada</div>

<!-- FOOTER -->
<div id="footer" class="a"></div>
<svg class="a" style="left:17px;top:1006px" width="25" height="20" viewBox="0 0 25 20"><path d="M0.8 10 L12.5 0.8 L18 5.2 V1.5 H21 V7.6 L24.2 10 L22.8 11.6 L12.5 3.6 L2.2 11.6 Z" fill="#8b8b8b"/><path d="M4 11.5 L12.5 5 L21 11.5 V19.5 H15 V14 H10 V19.5 H4 Z" fill="#8b8b8b"/></svg>
<div class="a" style="left:56px;top:1001px;width:2px;height:30px;background:#8b8b8b"></div>
<div class="a" style="left:66px;top:1001px;width:86px;height:30px;background:#d4d4d4"></div>
<svg class="a" style="left:66px;top:1001px" width="86" height="30" viewBox="0 0 86 30"><g fill="#8b8b8b"><rect x="17" y="0" width="13" height="3.5"/><rect x="25.8" y="0" width="4" height="12.5"/><rect x="0" y="17.3" width="3.8" height="12"/><rect x="0" y="25.5" width="12.4" height="3.8"/></g><g fill="#d6be58"><rect x="4" y="4" width="12.6" height="4.4"/><rect x="4" y="4" width="4.2" height="12.5"/><rect x="21.5" y="13.2" width="4.1" height="12.4"/><rect x="13" y="21.2" width="12.6" height="4.4"/></g><text x="29.5" y="25.5" font-family="Liberation Sans" font-weight="bold" font-size="12" fill="#8b8b8b" textLength="57" lengthAdjust="spacingAndGlyphs">mimware</text></svg>
<div class="a" style="left:159px;top:1001px;width:2px;height:30px;background:#8b8b8b"></div>
<svg class="a" style="left:169px;top:1006px" width="26" height="20" viewBox="0 0 26 20"><path d="M0.5 2.5 Q0.5 0.5 2.5 0.5 H10 L19.5 10 L10.5 19 L0.5 9 Z" fill="#8b8b8b"/><circle cx="4.5" cy="4.5" r="1.7" fill="#d5bb6c"/><path d="M13.5 0.5 L23 10 L14 19" fill="none" stroke="#8b8b8b" stroke-width="2"/></svg>
<div class="t" style="left:199px;top:1010px;font-size:12px;line-height:14px;font-weight:bold;color:#8b8b8b;letter-spacing:-0.05px">Ekipman Marka Tanımları</div>
<div class="a" style="left:1088px;top:1001px;width:2px;height:30px;background:#8b8b8b"></div>
<div class="a" style="left:1182px;top:1001px;width:2px;height:30px;background:#8b8b8b"></div>
<div class="a" style="left:1280px;top:1001px;width:2px;height:30px;background:#8b8b8b"></div>
<div class="a" style="left:1448px;top:1001px;width:2px;height:30px;background:#8b8b8b"></div>
<div class="a" style="left:1766px;top:1001px;width:2px;height:30px;background:#8b8b8b"></div>
<div class="a" style="left:1814px;top:1001px;width:2px;height:30px;background:#8b8b8b"></div>
<div class="a" style="left:1862px;top:1001px;width:2px;height:30px;background:#8b8b8b"></div>
<div class="t" style="left:1098px;top:1010px;font-size:12px;line-height:14px;font-weight:bold;color:#8b8b8b;letter-spacing:-0.2px">1.XXXX.XXXX</div>
<div class="t" style="left:1193px;top:1010px;font-size:12px;line-height:14px;font-weight:bold;color:#8b8b8b">176.88.200.13</div>
<div class="t" style="left:1318px;top:1010px;font-size:12px;line-height:14px;font-weight:bold;color:#8b8b8b">Mimware Admin</div>
<div class="t" style="left:1520px;top:1010px;font-size:12px;line-height:14px;font-weight:bold;color:#8b8b8b;letter-spacing:-0.15px">Yapı Merkezi İnşaat ve San. A.Ş.</div>
<svg class="a" style="left:1830px;top:1004px" width="24" height="24" viewBox="0 0 24 24"><circle cx="12" cy="12" r="11.8" fill="#8b8b8b"/><path d="M8.3 9.3 Q8.3 5.5 12 5.5 Q15.8 5.5 15.8 8.8 Q15.8 10.8 13.7 11.8 Q12.6 12.4 12.6 14" fill="none" stroke="#d5bb6c" stroke-width="2.8"/><circle cx="12.5" cy="17.8" r="1.7" fill="#d5bb6c"/></svg>
<svg class="a" style="left:1878px;top:1004px" width="24" height="24" viewBox="0 0 24 24"><path d="M7.2 5.5 A9.2 9.2 0 1 0 16.8 5.5" fill="none" stroke="#8b8b8b" stroke-width="3"/><path d="M12 1 V11.5" stroke="#8b8b8b" stroke-width="3"/></svg>

<!-- MODAL -->
<div id="modal" class="a"></div>
<svg class="a" style="left:324px;top:230px" width="16" height="16" viewBox="0 0 16 16"><path d="M1 9 V15 H7" fill="none" stroke="#6b6b6b" stroke-width="2"/><path d="M9 1 H15 V7" fill="none" stroke="#6b6b6b" stroke-width="2"/><path d="M3.5 11 V4 H9" fill="none" stroke="#f4c430" stroke-width="2"/><path d="M12.5 5 V12 H7" fill="none" stroke="#f4c430" stroke-width="2"/></svg>
<div class="t" style="left:349px;top:233px;font-size:14px;line-height:16px;font-weight:bold;color:#000">Makine Marka Tanımı</div>
<svg class="a" style="left:1581px;top:235px" width="13" height="12" viewBox="0 0 13 12"><path d="M2.6 2.3 L10.4 9.7 M10.4 2.3 L2.6 9.7" stroke="#2f4562" stroke-width="4" stroke-linecap="round"/><path d="M2.6 2.3 L10.4 9.7 M10.4 2.3 L2.6 9.7" stroke="#f2f2f0" stroke-width="1.9" stroke-linecap="round"/></svg>
<div id="mcontent" class="a"></div>
<!-- toolbar fieldset -->
<div class="a" style="left:330px;top:262px;width:1260px;height:44px;border:1px solid #dedede;border-radius:6px"></div>
<div class="a" style="left:339px;top:271px;width:80px;height:26px;border:1px solid #b9c9de;border-radius:3px;background:linear-gradient(#f3f7fc,#e9f0f8 48%,#dde7f4 52%,#dde7f4)"></div>
<svg class="a" style="left:344px;top:276px" width="13" height="13" viewBox="0 0 13 13"><path d="M0.5 0.5 H10.5 L12.5 2.5 V12.5 H0.5 Z" fill="#1f3050"/><rect x="3" y="0.5" width="5.5" height="3.8" fill="#dde7f4"/><rect x="6" y="1.2" width="1.6" height="2.4" fill="#1f3050"/><rect x="2.8" y="7.5" width="7.4" height="3" fill="#dde7f4"/></svg>
<div class="t" style="left:365px;top:278px;font-size:12px;line-height:14px;font-weight:bold;color:#1f2d48">Kaydet</div>
<div class="a" style="left:1501px;top:271px;width:80px;height:26px;border:1px solid #b9c9de;border-radius:3px;background:linear-gradient(#f3f7fc,#e9f0f8 48%,#dde7f4 52%,#dde7f4)"></div>
<svg class="a" style="left:1508px;top:278px" width="10" height="10" viewBox="0 0 10 10"><path d="M1 1 L9 9 M9 1 L1 9" stroke="#1f2d48" stroke-width="2"/></svg>
<div class="t" style="left:1527px;top:278px;font-size:12px;line-height:14px;font-weight:bold;color:#1f2d48">Kapat</div>
<!-- form fieldset -->
<div class="a" style="left:330px;top:311px;width:1260px;height:480px;border:1px solid #dedede;border-radius:6px"></div>
<div class="t" style="left:361px;top:328px;font-size:12px;line-height:14px;color:#1b1b1b;letter-spacing:-0.1px">Marka Kodu</div>
<div class="t" style="left:361px;top:354px;font-size:12px;line-height:14px;color:#1b1b1b;letter-spacing:-0.1px">Marka Adı</div>
<div class="t" style="left:361px;top:381px;font-size:12px;line-height:14px;color:#1b1b1b;letter-spacing:-0.3px">Referans Kodu</div>
<div class="a" style="left:441px;top:324px;width:250px;height:21px;border:1px solid #a9bed8;background:#fff"></div>
<div class="a" style="left:441px;top:350px;width:250px;height:22px;border:1px solid #a9bed8;background:#fff"></div>
<div class="a" style="left:441px;top:376px;width:250px;height:22px;border:1px solid #a9bed8;background:#fff"></div>
<div class="t" style="left:734px;top:328px;font-size:12px;line-height:14px;color:#1b1b1b;letter-spacing:-0.2px">İthalatçı Firma</div>
<div class="a" style="left:812px;top:324px;width:250px;height:21px;border:1px solid #a9bed8;background:#fff"></div>
<div class="a" style="left:812px;top:352px;width:13px;height:13px;border:1px solid #c1ccd9;background:linear-gradient(#dbe2ec,#f3f6fa);box-shadow:inset 0 0 0 1px #fff"></div>
<div class="t" style="left:833px;top:351px;font-size:12px;line-height:14px;color:#1b1b1b;letter-spacing:-0.25px">Kendi Markası</div>
<div class="a" style="left:812px;top:377px;width:13px;height:13px;border:1px solid #c1ccd9;background:linear-gradient(#dbe2ec,#f3f6fa);box-shadow:inset 0 0 0 1px #fff"></div>
<div class="t" style="left:833px;top:377px;font-size:12px;line-height:14px;color:#1b1b1b;letter-spacing:-0.3px">Kullanım Dışı</div>
<div class="t" style="left:1106px;top:327px;font-size:12px;line-height:14px;color:#1b1b1b;letter-spacing:-0.25px">Açıklama</div>
<div class="a" style="left:1157px;top:323px;width:250px;height:60px;border:1px solid #a9bed8;border-radius:4px;background:#fff"></div>
<!-- tab strip -->
<div class="a" style="left:341px;top:409px;width:1238px;height:36px;border-radius:3px 3px 0 0;background:linear-gradient(#5a676f,#3f4b53);overflow:hidden"><div class="a" style="left:0;top:0;width:126px;height:36px;background:linear-gradient(#6c7c85,#7b8b94)"></div></div>
<div class="t" style="left:360px;top:418px;font-size:15px;line-height:17px;color:#fff">Model Detayı</div>
<!-- model grid -->
<div class="a" style="left:341px;top:445px;width:1238px;height:55px;border:1px solid #a6b7cc;border-top:none;background:#fafafa"></div>
<div class="a" style="left:342px;top:445px;width:1236px;height:29px;background:#eff3fb"></div>
<svg class="a" style="left:352px;top:452px" width="11" height="11" viewBox="0 0 11 11"><path d="M5.5 0 V11 M0 5.5 H11" stroke="#666" stroke-width="2.2"/></svg>
<div class="t" style="left:350px;top:481px;font-size:12px;line-height:14px;color:#1b1b1b;letter-spacing:-0.1px">No records to display.</div>
<div class="a" style="left:422px;top:445px;width:1px;height:29px;background:#dbe3ee"></div>
<div class="a" style="left:455px;top:445px;width:1px;height:29px;background:#dbe3ee"></div>
<div class="a" style="left:488px;top:445px;width:1px;height:29px;background:#dbe3ee"></div>
<div class="a" style="left:521px;top:445px;width:1px;height:29px;background:#dbe3ee"></div>
<div class="a" style="left:554px;top:445px;width:1px;height:29px;background:#dbe3ee"></div>
<div class="a" style="left:615px;top:445px;width:1px;height:29px;background:#dbe3ee"></div>
<div class="a" style="left:715px;top:445px;width:1px;height:29px;background:#dbe3ee"></div>
<div class="a" style="left:914px;top:445px;width:1px;height:29px;background:#dbe3ee"></div>
<div class="a" style="left:1025px;top:445px;width:1px;height:29px;background:#dbe3ee"></div>
<div class="a" style="left:1224px;top:445px;width:1px;height:29px;background:#dbe3ee"></div>
<div class="a" style="left:1467px;top:445px;width:1px;height:29px;background:#dbe3ee"></div>
<div class="t" style="left:562px;top:454px;font-size:12px;line-height:14px;color:#5b6679;letter-spacing:-0.2px">Sıra No</div>
<div class="t" style="left:623px;top:454px;font-size:12px;line-height:14px;color:#5b6679;letter-spacing:0px">Model Kodu</div>
<div class="t" style="left:723px;top:454px;font-size:12px;line-height:14px;color:#5b6679;letter-spacing:-0.1px">Model Adı</div>
<div class="t" style="left:922px;top:454px;font-size:12px;line-height:14px;color:#5b6679;letter-spacing:-0.3px">Referans Kodu</div>
<div class="t" style="left:1032px;top:454px;font-size:12px;line-height:14px;color:#5b6679;letter-spacing:-0.1px">Grup Adı</div>
<div class="t" style="left:1232px;top:454px;font-size:12px;line-height:14px;color:#5b6679;letter-spacing:-0.1px">Tip Adı</div>
<div class="t" style="left:1476px;top:454px;font-size:12px;line-height:14px;color:#5b6679;letter-spacing:-0.3px">Kullanım Dışı</div>
</body></html>
